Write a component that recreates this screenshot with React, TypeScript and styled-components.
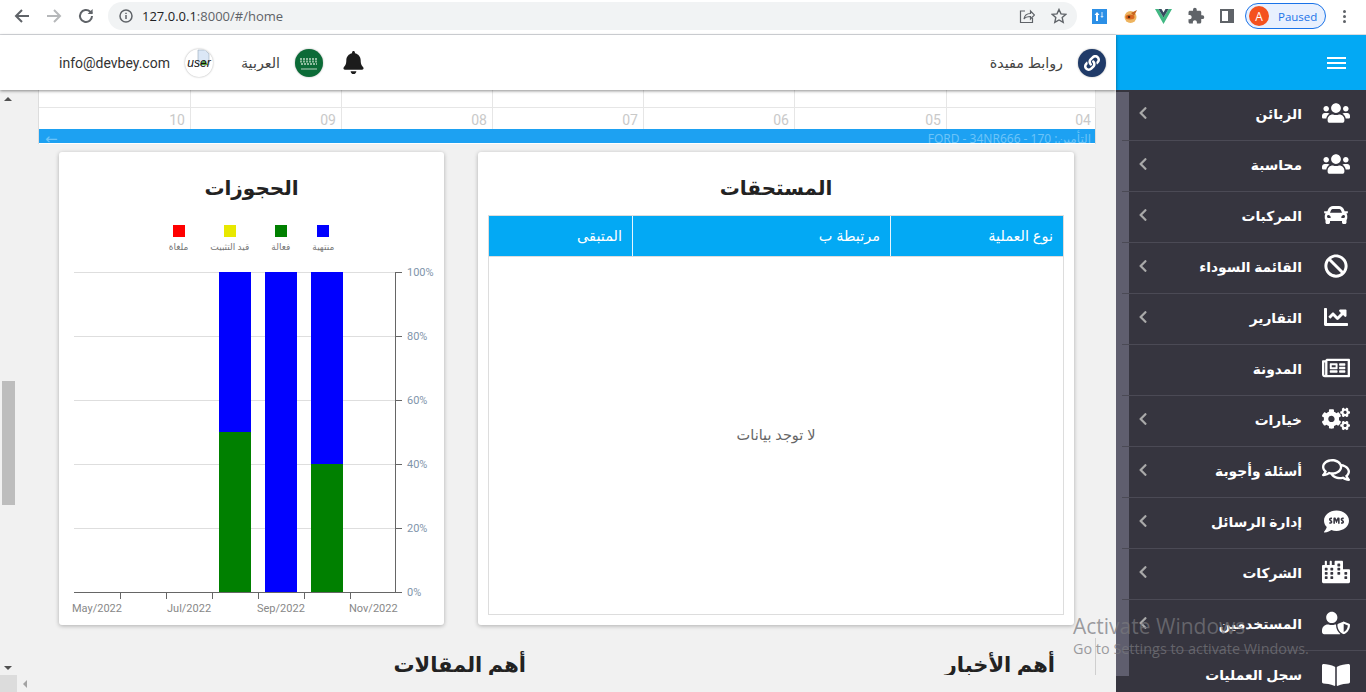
import styled, { createGlobalStyle } from "styled-components";
import type { ReactNode } from "react";
import {
  FaUsers, FaCar, FaBan, FaChartLine, FaRegNewspaper, FaCogs, FaRegComments, FaSms,
  FaCity, FaUserShield, FaBookOpen, FaChevronLeft, FaBell, FaLink,
} from "react-icons/fa";
import { MdExtension } from "react-icons/md";

const Global = createGlobalStyle`
  html, body { margin: 0; padding: 0; height: 100%; overflow: hidden; background: #f1f1f1; }
  body { font-family: "Roboto", "DejaVu Sans", sans-serif; }
  * { box-sizing: border-box; }
`;

const ARABIC = `"Noto Sans", "DejaVu Sans", sans-serif`;

const Page = styled.div`
  position: relative;
  width: 1366px;
  height: 692px;
  overflow: hidden;
  display: flex;
  flex-direction: column;
`;

/* browser chrome */
const BrowserBar = styled.div`
  height: 35px;
  flex: none;
  background: #fff;
  border-bottom: 1px solid #dadce0;
  display: flex;
  align-items: center;
  padding: 0 0 2px 13px;
`;
const NavIcon = styled.svg<{ $gap?: number }>`
  width: 18px;
  height: 18px;
  flex: none;
  margin-right: ${({ $gap }) => $gap ?? 14}px;
`;
const Omnibox = styled.div`
  width: 969px;
  height: 28px;
  margin-left: 13px;
  border-radius: 14px;
  background: #f1f3f4;
  display: flex;
  align-items: center;
  padding: 0 10px 0 11px;
`;
const Url = styled.span`
  font: 400 13px "Open Sans", sans-serif;
  color: #5f6368;
  margin-left: 9px;
  flex: 1;
  b { font-weight: 400; color: #202124; }
`;
const Extensions = styled.div`
  display: flex;
  align-items: center;
  margin-left: 15px;
`;
const ExtSlot = styled.div<{ $w: number }>`
  width: ${({ $w }) => $w}px;
  display: flex;
  align-items: center;
`;
const ProfilePill = styled.div`
  width: 81px;
  height: 26px;
  border: 1px solid #1a73e8;
  border-radius: 13px;
  background: #e8f0fe;
  display: flex;
  align-items: center;
  padding-left: 3px;
  font: 400 11.5px "Open Sans", sans-serif;
  color: #1a73e8;
  gap: 9px;
`;
const Avatar = styled.span`
  width: 20px;
  height: 20px;
  border-radius: 50%;
  background: #f4511e;
  color: #fff;
  display: flex;
  align-items: center;
  justify-content: center;
  font-size: 12px;
`;
const Dots = styled.div`
  margin-left: 17px;
  display: flex;
  flex-direction: column;
  gap: 2px;
  span { width: 3px; height: 3px; border-radius: 50%; background: #5f6368; }
`;

/* app frame */
const AppRow = styled.div`
  flex: 1;
  min-height: 0;
  display: flex;
`;
const Main = styled.div`
  width: 1116px;
  flex: none;
  display: flex;
  flex-direction: column;
  background: #f1f1f1;
  position: relative;
`;
const TopBar = styled.header`
  height: 55px;
  flex: none;
  background: #fff;
  box-shadow: 0 1px 3px rgba(0, 0, 0, 0.45);
  position: relative;
  z-index: 2;
  display: flex;
  align-items: center;
  padding: 0 10px 0 59px;
  color: #333;
`;
const TopText = styled.span`
  font-size: 14px;
`;
const TopArabic = styled.span`
  font: 400 14.3px ${ARABIC};
  color: #444;
`;
const RoundBadge = styled.span<{ $bg: string }>`
  width: 28px;
  height: 28px;
  border-radius: 50%;
  background: ${({ $bg }) => $bg};
  box-shadow: 0 0 2px rgba(0, 0, 0, 0.35);
  display: flex;
  align-items: center;
  justify-content: center;
  flex: none;
  overflow: hidden;
  color: #fff;
`;
const UserPic = styled(RoundBadge)`
  margin-left: 15px;
  margin-right: 28px;
  font: italic 400 12px "Liberation Sans", sans-serif;
  color: #111;
  position: relative;
`;
const Flag = styled(RoundBadge)`
  margin-left: 15px;
  margin-right: 19px;
`;
const Bell = styled(FaBell)`
  color: #1c1c1c;
  font-size: 23px;
`;
const TopSpacer = styled.div`
  flex: 1;
`;
const LinkBadge = styled(RoundBadge)`
  margin-left: 15px;
`;

const Body = styled.div`
  flex: 1;
  min-height: 0;
  display: flex;
  position: relative;
`;
const VScroll = styled.div`
  width: 16px;
  flex: none;
  padding: 7px 0 22px;
  display: flex;
  flex-direction: column;
  align-items: center;
  justify-content: space-between;
  position: relative;
`;
const Arrow = styled.span<{ $dir: "up" | "down" | "left" }>`
  width: 0;
  height: 0;
  border-style: solid;
  ${({ $dir }) =>
    $dir === "up"
      ? "border-width: 0 4px 4px; border-color: transparent transparent #505050;"
      : $dir === "down"
      ? "border-width: 4px 4px 0; border-color: #505050 transparent transparent;"
      : "border-width: 4px 4px 4px 0; border-color: transparent #a3a3a3 transparent transparent;"}
`;
const VThumb = styled.div`
  position: absolute;
  left: 2px;
  top: 291px;
  width: 13px;
  height: 124px;
  background: #bdbdbd;
`;
const HScroll = styled.div`
  position: absolute;
  left: 0;
  right: 0;
  bottom: 0;
  height: 17px;
  background: #f1f1f1;
  display: flex;
  align-items: center;
  z-index: 1;
`;
const Corner = styled.div`
  width: 17px;
  height: 17px;
  background: #dcdcdc;
  margin-right: 6px;
`;
const Content = styled.div`
  flex: 1;
  min-width: 0;
  padding-left: 22px;
  overflow: hidden;
`;

/* calendar strip */
const Calendar = styled.div`
  width: 1058px;
  height: 54px;
  background: #fff;
  border-right: 1px solid #ddd;
  border-left: 1px solid #ddd;
`;
const CalGrid = styled.div`
  display: grid;
  grid-template-columns: 152px 151px 151px 151px 151px 152px 149px;
`;
const CalTop = styled.div`
  height: 18px;
  border-bottom: 1px solid #e6e6e6;
  border-right: 1px solid #e6e6e6;
  &:last-child { border-right: 0; }
`;
const CalDay = styled.div`
  height: 21px;
  padding: 4px 5px 0 0;
  text-align: right;
  font-size: 14px;
  line-height: 17px;
  color: #c9c9c9;
  border-right: 1px solid #e6e6e6;
  &:last-child { border-right: 0; }
`;
const CalEvent = styled.div`
  height: 14px;
  background: #1da1f2;
  display: flex;
  justify-content: space-between;
  padding: 2px 4px 0 6px;
  overflow: hidden;
  color: #6cc4f8;
  font: 400 12px/16px ${ARABIC};
`;
const CalArrow = styled.span`
  font-size: 15px;
  line-height: 14px;
`;

/* cards */
const CardsRow = styled.div`
  margin: 8px 0 0 21px;
  display: flex;
  gap: 34px;
`;
const Card = styled.section<{ $w: number }>`
  width: ${({ $w }) => $w}px;
  height: 473px;
  flex: none;
  background: #fff;
  border-radius: 3px;
  box-shadow: 0 1px 4px rgba(0, 0, 0, 0.28);
  display: flex;
  flex-direction: column;
  align-items: center;
  padding-top: 20px;
`;
const CardTitle = styled.h2`
  margin: 0;
  font: 700 20px/32px ${ARABIC};
  color: #222;
  height: 32px;
`;
const Legend = styled.div`
  margin-top: 21px;
  display: flex;
  gap: 22px;
  direction: rtl;
`;
const LegendItem = styled.div`
  display: flex;
  flex-direction: column;
  align-items: center;
  gap: 4px;
  font: 400 9px/11px ${ARABIC};
  color: #777;
`;
const Swatch = styled.span<{ $c: string }>`
  width: 12px;
  height: 12px;
  background: ${({ $c }) => $c};
`;
const ChartSvg = styled.svg`
  display: block;
  margin-top: 13px;
  font-family: Roboto, sans-serif;
  font-size: 11px;
`;
const Table = styled.div`
  margin-top: 11px;
  width: 576px;
  height: 400px;
  border: 1px solid #ddd;
  display: flex;
  flex-direction: column;
`;
const TableHead = styled.div`
  height: 41px;
  flex: none;
  display: grid;
  grid-template-columns: 144px 258px 1fr;
  background: #03a9f4;
  border-bottom: 1px solid #ddd;
`;
const Th = styled.div`
  padding: 0 10px 3px 0;
  display: flex;
  align-items: center;
  justify-content: flex-end;
  font: 500 14.5px ${ARABIC};
  color: #fff;
  border-right: 1px solid #e4f5fe;
  &:last-child { border-right: 0; }
`;
const Empty = styled.div`
  flex: 1;
  display: flex;
  align-items: center;
  justify-content: center;
  font: 400 14.5px ${ARABIC};
  color: #666;
  padding-bottom: 4px;
`;
const Headings = styled.div`
  margin-top: 23px;
  display: flex;
  height: 32px;
  overflow: hidden;
`;
const SectionTitle = styled.h3<{ $w: number }>`
  margin: 0;
  width: ${({ $w }) => $w}px;
  text-align: right;
  font: 700 21px/32px ${ARABIC};
  color: #222;
`;
const FooterRule = styled.div`
  position: absolute;
  left: 1095px;
  top: 548px;
  width: 1px;
  height: 37px;
  background: #cfcfcf;
`;

/* sidebar */
const Sidebar = styled.aside`
  width: 250px;
  flex: none;
  display: flex;
  flex-direction: column;
  background: #36353f;
  position: relative;
`;
const Brand = styled.div`
  height: 55px;
  flex: none;
  background: #03a9f4;
  display: flex;
  align-items: center;
  justify-content: flex-end;
  padding-right: 20px;
`;
const Burger = styled.div`
  width: 19px;
  display: flex;
  flex-direction: column;
  gap: 3px;
  span { height: 2px; background: #fff; }
`;
const MenuStripe = styled.div`
  position: absolute;
  left: 0;
  top: 57px;
  width: 13px;
  height: 584px;
  background: #5f5e6e;
`;
const Menu = styled.nav`
  flex: 1;
  padding-left: 6px;
  position: relative;
`;
const MenuItem = styled.div`
  height: 51px;
  border-bottom: 1px solid #4b4a55;
  display: flex;
  align-items: center;
  padding: 0 15px 4px 14px;
  color: #fff;
  &:last-child { border-bottom: 0; }
`;
const Chevron = styled(FaChevronLeft)`
  color: #a9a9a9;
  font-size: 14px;
  flex: none;
`;
const MenuLabel = styled.span`
  margin-left: auto;
  font: 700 13.8px ${ARABIC};
  color: #fff;
`;
const MenuIcon = styled.span`
  width: 30px;
  margin-left: 19px;
  display: flex;
  justify-content: center;
  font-size: 28px;
  flex: none;
`;

const ActivateNote = styled.div`
  position: absolute;
  left: 1073px;
  top: 613px;
  z-index: 5;
  color: rgba(120, 120, 125, 0.72);
  font: 400 21px/26px "Open Sans", sans-serif;
  pointer-events: none;
  white-space: nowrap;
  small { display: block; font-size: 14.4px; line-height: 20px; }
`;

const days = ["10", "09", "08", "07", "06", "05", "04"];

const menu: { label: string; icon: ReactNode; arrow?: boolean }[] = [
  { label: "الزبائن", icon: <FaUsers />, arrow: true },
  { label: "محاسبة", icon: <FaUsers />, arrow: true },
  { label: "المركبات", icon: <FaCar style={{ fontSize: 24 }} />, arrow: true },
  { label: "القائمة السوداء", icon: <FaBan style={{ fontSize: 24 }} />, arrow: true },
  { label: "التقارير", icon: <FaChartLine style={{ fontSize: 24 }} />, arrow: true },
  { label: "المدونة", icon: <FaRegNewspaper /> },
  { label: "خيارات", icon: <FaCogs />, arrow: true },
  { label: "أسئلة وأجوبة", icon: <FaRegComments />, arrow: true },
  { label: "إدارة الرسائل", icon: <FaSms style={{ fontSize: 25 }} />, arrow: true },
  { label: "الشركات", icon: <FaCity />, arrow: true },
  { label: "المستخدمين", icon: <FaUserShield />, arrow: true },
  { label: "سجل العمليات", icon: <FaBookOpen /> },
];

const legend = [
  { c: "#ff0000", t: "ملغاة" },
  { c: "#e8e800", t: "قيد التثبيت" },
  { c: "#008000", t: "فعالة" },
  { c: "#0000ff", t: "منتهية" },
].reverse();

// chart coordinates are page x minus 59, page y minus 265
const gridY = [7, 71, 135, 199, 263, 327];
const yLabels = ["100%", "80%", "60%", "40%", "20%", "0%"];
const ticksX = [61, 107, 153, 199, 245, 291];
const bars = [
  { x: 160, split: 167 },
  { x: 206, split: 327 },
  { x: 252, split: 199 },
];

function Chart() {
  return (
    <ChartSvg width={385} height={350} viewBox="0 0 385 350">
      {gridY.map((y, i) => (
        <line key={y} x1={15} x2={336} y1={y + 0.5} y2={y + 0.5} stroke={i === 5 ? "#666" : "#dedede"} />
      ))}
      {bars.map((b) => (
        <g key={b.x}>
          <rect x={b.x} y={7} width={32} height={b.split - 7} fill="#0000ff" />
          <rect x={b.x} y={b.split} width={32} height={327 - b.split} fill="#008000" />
        </g>
      ))}
      <line x1={336.5} x2={336.5} y1={7} y2={327} stroke="#666" />
      {gridY.map((y, i) => (
        <g key={y}>
          <line x1={336} x2={343} y1={y + 0.5} y2={y + 0.5} stroke="#666" />
          <text x={348} y={y + 4} fill="#7f95ab">{yLabels[i]}</text>
        </g>
      ))}
      {ticksX.map((x) => (
        <line key={x} x1={x + 0.5} x2={x + 0.5} y1={327} y2={334} stroke="#666" />
      ))}
      <text x={13} y={347} fill="#888">May/2022</text>
      <text x={108} y={347} fill="#888">Jul/2022</text>
      <text x={198} y={347} fill="#888">Sep/2022</text>
      <text x={290} y={347} fill="#888">Nov/2022</text>
    </ChartSvg>
  );
}

export default function App() {
  return (
    <>
      <Global />
      <Page>
        <BrowserBar>
          <NavIcon viewBox="0 0 18 18" fill="none" stroke="#5f6368" strokeWidth={2}>
            <path d="M16 9H3M9 3 3 9l6 6" />
          </NavIcon>
          <NavIcon viewBox="0 0 18 18" fill="none" stroke="#b6b8ba" strokeWidth={2}>
            <path d="M2 9h13M9 3l6 6-6 6" />
          </NavIcon>
          <NavIcon viewBox="0 0 18 18" fill="none" stroke="#5f6368" strokeWidth={2} $gap={0}>
            <path d="M15 9a6 6 0 1 1-1.8-4.3L15 6.5" />
            <path d="M15.6 2v5h-5" fill="#5f6368" stroke="none" />
          </NavIcon>
          <Omnibox>
            <svg width="14" height="14" viewBox="0 0 14 14" fill="none">
              <circle cx="7" cy="7" r="6" stroke="#5f6368" strokeWidth="1.5" />
              <path d="M7 6v4M7 3.8v1.2" stroke="#5f6368" strokeWidth="1.5" />
            </svg>
            <Url><b>127.0.0.1</b>:8000/#/home</Url>
            <svg width="16" height="16" viewBox="0 0 16 16" fill="none" stroke="#5f6368" strokeWidth="1.2" style={{ marginRight: 16 }}>
              <path d="M6 3H1.500v11.500h12V10" />
              <path d="M5 11c.5-3.500 3-5.500 6.500-5.500V3l4 4-4 4V8.500C9 8.500 6.500 9 5 11z" />
            </svg>
            <svg width="16" height="16" viewBox="0 0 16 16" fill="none" stroke="#5f6368" strokeWidth="1.4">
              <path d="m8 1.500 2 4.400 4.700.5-3.500 3.200 1 4.700L8 12l-4.200 2.300 1-4.700L1.300 6.400 6 5.900z" />
            </svg>
          </Omnibox>
          <Extensions>
            <ExtSlot $w={31}>
              <svg width="15" height="15" viewBox="0 0 15 15">
                <rect width="15" height="15" fill="#2b8fe6" />
                <path d="M4 12V6H2.500L5 3l2.500 3H6v6z" fill="#fff" />
                <path d="M9.500 3h1v4h1.200l-1.700 2-1.700-2h1.200z" fill="#cfe6fa" />
              </svg>
            </ExtSlot>
            <ExtSlot $w={32}>
              <svg width="15" height="15" viewBox="0 0 15 15">
                <circle cx="7.500" cy="8" r="6" fill="#eeb45f" />
                <ellipse cx="7" cy="8" rx="4.500" ry="2.500" fill="#d9651f" />
                <circle cx="6" cy="8" r="1.300" fill="#5a2c10" />
                <path d="M8 4l6-3-3 6z" fill="#c9651f" />
              </svg>
            </ExtSlot>
            <ExtSlot $w={32}>
              <svg width="17" height="15" viewBox="0 0 17 15">
                <path d="M0 0h3.500l5 8.500 5-8.500H17L8.500 15z" fill="#41b883" />
                <path d="M3.500 0h3l2 3.500 2-3.500h3l-5 8.500z" fill="#35495e" />
              </svg>
            </ExtSlot>
            <ExtSlot $w={33}>
              <MdExtension color="#5f6368" size={18} />
            </ExtSlot>
            <ExtSlot $w={25}>
              <svg width="14" height="14" viewBox="0 0 14 14">
                <rect width="14" height="14" fill="#5f6368" />
                <rect x="2" y="2" width="6" height="10" fill="#fff" />
              </svg>
            </ExtSlot>
            <ProfilePill>
              <Avatar>A</Avatar>
              Paused
            </ProfilePill>
            <Dots><span /><span /><span /></Dots>
          </Extensions>
        </BrowserBar>

        <AppRow>
          <Main>
            <TopBar>
              <TopText>info@devbey.com</TopText>
              <UserPic $bg="#fff">
                <svg width="28" height="28" viewBox="0 0 28 28" style={{ position: "absolute" }}>
                  <path d="M13 1h7l4 4v11H13z" fill="#dbe7f6" stroke="#9ab" strokeWidth=".6" />
                  <path d="M15 16l4-5 4 5z" fill="#5aa83c" />
                </svg>
                <span style={{ position: "relative" }}>user</span>
              </UserPic>
              <TopArabic>العربية</TopArabic>
              <Flag $bg="#0b6b37">
                <svg width="28" height="28" viewBox="0 0 28 28" fill="none">
                  <path d="M5 10h18M5 12.500h18M6 15h16" stroke="#8fbd9f" strokeWidth="1.800" strokeDasharray="2 1" />
                  <path d="M6 20h16" stroke="#b6d2c0" strokeWidth="1.200" />
                </svg>
              </Flag>
              <Bell />
              <TopSpacer />
              <TopArabic>روابط مفيدة</TopArabic>
              <LinkBadge $bg="#1f3a68">
                <FaLink size={16} />
              </LinkBadge>
            </TopBar>
            <Body>
              <VScroll>
                <Arrow $dir="up" />
                <VThumb />
                <Arrow $dir="down" />
              </VScroll>
              <Content>
                <Calendar>
                  <CalGrid>
                    {days.map((d) => <CalTop key={d} />)}
                    {days.map((d) => <CalDay key={d}>{d}</CalDay>)}
                  </CalGrid>
                  <CalEvent>
                    <CalArrow>←</CalArrow>
                    <span dir="rtl">{"التأمين: 170 - 34NR666\u200F - FORD"}</span>
                  </CalEvent>
                </Calendar>
                <CardsRow>
                  <Card $w={385}>
                    <CardTitle>الحجوزات</CardTitle>
                    <Legend>
                      {legend.map((l) => (
                        <LegendItem key={l.t}>
                          <Swatch $c={l.c} />
                          {l.t}
                        </LegendItem>
                      ))}
                    </Legend>
                    <Chart />
                  </Card>
                  <Card $w={596}>
                    <CardTitle>المستحقات</CardTitle>
                    <Table>
                      <TableHead>
                        <Th>المتبقى</Th>
                        <Th>مرتبطة ب</Th>
                        <Th>نوع العملية</Th>
                      </TableHead>
                      <Empty>لا توجد بيانات</Empty>
                    </Table>
                  </Card>
                </CardsRow>
                <Headings>
                  <SectionTitle $w={488}>أهم المقالات</SectionTitle>
                  <SectionTitle $w={529}>أهم الأخبار</SectionTitle>
                </Headings>
              </Content>
              <FooterRule />
              <HScroll>
                <Corner />
                <Arrow $dir="left" />
              </HScroll>
            </Body>
          </Main>
          <Sidebar>
            <Brand>
              <Burger><span /><span /><span /></Burger>
            </Brand>
            <MenuStripe />
            <Menu>
              {menu.map((m) => (
                <MenuItem key={m.label}>
                  {m.arrow && <Chevron />}
                  <MenuLabel>{m.label}</MenuLabel>
                  <MenuIcon>{m.icon}</MenuIcon>
                </MenuItem>
              ))}
            </Menu>
          </Sidebar>
        </AppRow>
        <ActivateNote>
          Activate Windows
          <small>Go to Settings to activate Windows.</small>
        </ActivateNote>
      </Page>
    </>
  );
}
